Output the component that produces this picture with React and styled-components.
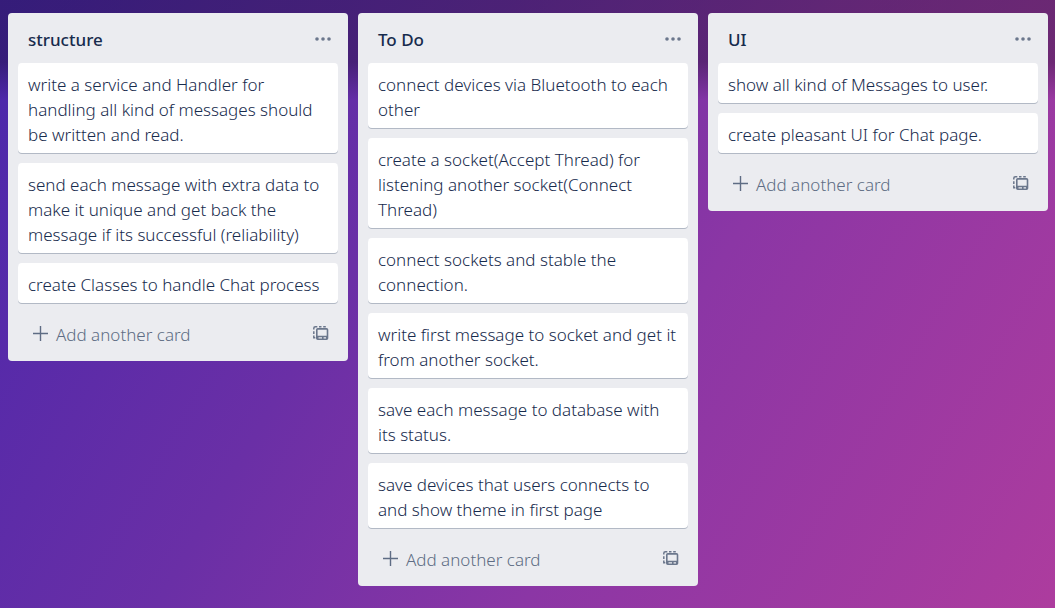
import React from "react";
import styled, { createGlobalStyle } from "styled-components";

const GlobalStyle = createGlobalStyle`
  *, *::before, *::after { box-sizing: border-box; }
  body {
    margin: 0;
    font-family: "Noto Sans", "Open Sans", sans-serif;
    font-size: 17px;
    line-height: 25px;
    color: #172b4d;
  }
`;

const Board = styled.main`
  display: grid;
  grid-template-columns: repeat(3, minmax(0, 1fr));
  align-items: start;
  gap: 10px;
  min-height: 100vh;
  padding: 13px 7px 22px 8px;
  background:
    linear-gradient(to bottom, rgba(0, 0, 0, 0.29) 0, rgba(0, 0, 0, 0.29) 62px, rgba(0, 0, 0, 0) 100px),
    linear-gradient(120deg, #4a27ab 0%, #6a2fa6 36%, #8b36a5 62%, #ad3c9e 100%);
`;

const List = styled.section`
  padding: 0 10px;
  border-radius: 4px;
  background: #ebecf0;
`;

const ListHeader = styled.header`
  display: flex;
  align-items: center;
  justify-content: space-between;
  height: 50px;
  padding: 3px 0 0 10px;
`;

const ListTitle = styled.h2`
  margin: 0;
  font-size: 17px;
  font-weight: 500;
`;

const IconButton = styled.button`
  display: grid;
  place-items: center;
  width: 30px;
  height: 30px;
  padding: 0;
  border: 0;
  background: none;
  color: #6b778c;
`;

const Cards = styled.ul`
  display: grid;
  gap: 10px;
  margin: 0;
  padding: 0;
  list-style: none;
`;

const Card = styled.li`
  padding: 9px 10px 6px;
  border-radius: 4px;
  background: #fff;
  box-shadow: 0 1px 0 rgba(9, 30, 66, 0.25);
  font-weight: 300;
`;

const ListFooter = styled.footer`
  display: flex;
  align-items: center;
  justify-content: space-between;
  height: 58px;
  padding: 3px 2px 0 15px;
`;

const AddButton = styled.button`
  display: flex;
  align-items: center;
  gap: 7px;
  padding: 1px 0 0;
  border: 0;
  background: none;
  color: #5e6c84;
  font: inherit;
  font-weight: 300;
`;

const lists = [
  {
    title: "structure",
    cards: [
      "write a service and Handler for handling all kind of messages should be written and read.",
      "send each message with extra data to make it unique and get back the message if its successful (reliability)",
      "create Classes to handle Chat process",
    ],
  },
  {
    title: "To Do",
    cards: [
      "connect devices via Bluetooth to each other",
      "create a socket(Accept Thread) for listening another socket(Connect Thread)",
      "connect sockets and stable the connection.",
      "write first message to socket and get it from another socket.",
      "save each message to database with its status.",
      "save devices that users connects to and show theme in first page",
    ],
  },
  {
    title: "UI",
    cards: ["show all kind of Messages to user.", "create pleasant UI for Chat page."],
  },
];

const DotsIcon = () => (
  <svg width="16" height="16" viewBox="0 0 16 16" fill="currentColor" aria-hidden="true">
    <circle cx="2" cy="7" r="1.8" />
    <circle cx="8" cy="7" r="1.8" />
    <circle cx="14" cy="7" r="1.8" />
  </svg>
);

const PlusIcon = () => (
  <svg width="16" height="16" viewBox="0 0 16 16" stroke="currentColor" strokeWidth="1.4" aria-hidden="true">
    <path d="M7.5 0v15M0 7.5h15" />
  </svg>
);

const TemplateIcon = () => (
  <svg width="16" height="16" viewBox="0 0 16 16" fill="none" stroke="currentColor" aria-hidden="true">
    <path d="M.8 3.500V2.300Q.8.800 2.300.800H4.300M6 .800h2.500M10.200.800h2.600M.800 5.200v2.800M.800 9.500v2.300h1.500" strokeWidth="1.500" />
    <path
      d="M4.800 2h8.700a1.800 1.800 0 0 1 1.800 1.800v8.400a1.800 1.800 0 0 1-1.800 1.800H4.800a1.800 1.800 0 0 1-1.800-1.800V3.800a1.800 1.800 0 0 1 1.800-1.800zM4.600 3.700v6.100h9.100V3.700zM5.500 11.300v1.100h3.500v-1.100zM10.600 11.300v1.100h2.400v-1.100z"
      fill="currentColor"
      fillRule="evenodd"
      stroke="none"
    />
  </svg>
);

export default function App() {
  return (
    <>
      <GlobalStyle />
      <Board>
        {lists.map(({ title, cards }) => (
          <List key={title}>
            <ListHeader>
              <ListTitle>{title}</ListTitle>
              <IconButton type="button" aria-label="List actions">
                <DotsIcon />
              </IconButton>
            </ListHeader>
            <Cards>
              {cards.map((text) => (
                <Card key={text}>{text}</Card>
              ))}
            </Cards>
            <ListFooter>
              <AddButton type="button">
                <PlusIcon />
                Add another card
              </AddButton>
              <IconButton type="button" aria-label="Create from template">
                <TemplateIcon />
              </IconButton>
            </ListFooter>
          </List>
        ))}
      </Board>
    </>
  );
}
